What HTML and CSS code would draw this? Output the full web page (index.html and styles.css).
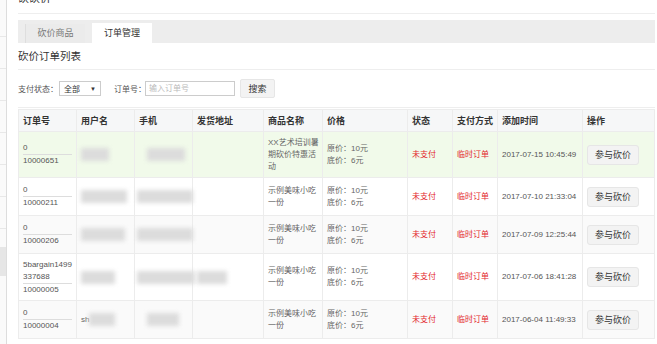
FILE: index.html
```html
<!DOCTYPE html>
<html lang="zh-CN">
<head>
    <meta charset="UTF-8">
    <title>砍砍价 - 订单管理</title>
    <link rel="stylesheet" href="styles.css">
</head>
<body>
<div class="page">
    <aside class="side">
        <div class="side-item"></div>
        <div class="side-item"></div>
        <div class="side-item"></div>
        <div class="side-item"></div>
        <div class="side-item"></div>
        <div class="side-item"></div>
        <div class="side-item"></div>
        <div class="side-gap"></div>
        <div class="side-item on"></div>
    </aside>
    <main class="main">
        <div class="top-title"><span>砍砍价</span></div>
        <div class="tabs">
            <a class="tab">砍价商品</a>
            <a class="tab active">订单管理</a>
        </div>
        <h2 class="list-title">砍价订单列表</h2>
        <div class="filter">
            <label>支付状态：</label>
            <div class="select"><span>全部</span><i>▼</i></div>
            <label class="ml">订单号：</label>
            <div class="input">输入订单号</div>
            <button class="btn-search">搜索</button>
        </div>
        <table class="orders">
            <colgroup>
                <col class="c58"><col class="c58"><col class="c58"><col class="c71"><col class="c59">
                <col class="c85"><col class="c45"><col class="c45"><col class="c85"><col class="c72">
            </colgroup>
            <thead>
                <tr>
                    <th>订单号</th><th>用户名</th><th>手机</th><th>发货地址</th><th>商品名称</th>
                    <th>价格</th><th>状态</th><th>支付方式</th><th>添加时间</th><th>操作</th>
                </tr>
            </thead>
            <tbody>
                <tr class="success">
                    <td><div class="ono-a">0</div><div>10000651</div></td>
                    <td><span class="blur b28"></span></td>
                    <td><span class="blur b38 in9"></span></td>
                    <td></td>
                    <td class="goods">XX艺术培训暑期砍价特惠活<br>动</td>
                    <td><div>原价：10元</div><div>底价：6元</div></td>
                    <td class="red">未支付</td>
                    <td class="red">临时订单</td>
                    <td class="time">2017-07-15 10:45:49</td>
                    <td><button class="btn-join">参与砍价</button></td>
                </tr>
                <tr>
                    <td><div class="ono-a">0</div><div>10000211</div></td>
                    <td><span class="blur b46"></span></td>
                    <td><span class="blur b56 out"></span></td>
                    <td></td>
                    <td class="goods">示例美味小吃一份</td>
                    <td><div>原价：10元</div><div>底价：6元</div></td>
                    <td class="red">未支付</td>
                    <td class="red">临时订单</td>
                    <td class="time">2017-07-10 21:33:04</td>
                    <td><button class="btn-join">参与砍价</button></td>
                </tr>
                <tr class="odd">
                    <td><div class="ono-a">0</div><div>10000206</div></td>
                    <td><span class="blur b44"></span></td>
                    <td><span class="blur b56 out"></span></td>
                    <td></td>
                    <td class="goods">示例美味小吃一份</td>
                    <td><div>原价：10元</div><div>底价：6元</div></td>
                    <td class="red">未支付</td>
                    <td class="red">临时订单</td>
                    <td class="time">2017-07-09 12:25:44</td>
                    <td><button class="btn-join">参与砍价</button></td>
                </tr>
                <tr>
                    <td><div class="ono-a">5bargain1499337688</div><div>10000005</div></td>
                    <td><span class="blur b34"></span></td>
                    <td><span class="blur b58 out"></span></td>
                    <td><span class="blur b30"></span></td>
                    <td class="goods">示例美味小吃一份</td>
                    <td><div>原价：10元</div><div>底价：6元</div></td>
                    <td class="red">未支付</td>
                    <td class="red">临时订单</td>
                    <td class="time">2017-07-06 18:41:28</td>
                    <td><button class="btn-join">参与砍价</button></td>
                </tr>
                <tr class="odd">
                    <td><div class="ono-a">0</div><div>10000004</div></td>
                    <td>sh<span class="blur b26"></span></td>
                    <td><span class="blur b32 in9"></span></td>
                    <td></td>
                    <td class="goods">示例美味小吃一份</td>
                    <td><div>原价：10元</div><div>底价：6元</div></td>
                    <td class="red">未支付</td>
                    <td class="red">临时订单</td>
                    <td class="time">2017-06-04 11:49:33</td>
                    <td><button class="btn-join">参与砍价</button></td>
                </tr>
            </tbody>
        </table>
    </main>
</div>
</body>
</html>
```

FILE: styles.css
```css
body {
    margin: 0;
    font-family: "Liberation Sans", "Noto Sans CJK SC", sans-serif;
    font-size: 8px;
    color: #666;
    background: #fff;
    overflow: hidden;
}
.page {
    display: flex;
    height: 344px;
}

/* 左侧菜单，只露出一条边 */
.side {
    width: 6px;
    padding-top: 5px;
    background: #fafafa;
    border-right: 1px solid #ddd;
}
.side-item {
    height: 31px;
    border-bottom: 1px solid #e8e8e8;
}
.side-gap {
    height: 18px;
}
.side-item.on {
    height: 29px;
    background: #e6e6e6;
    border-bottom: 0;
}

.main {
    flex: 1;
    padding: 0 2px 0 11px;
}
.top-title {
    height: 13px;
    overflow: hidden;
    border-bottom: 1px solid #eee;
}
.top-title span {
    display: block;
    margin-top: -9px;
    font-size: 11px;
    line-height: 14px;
    color: #333;
}

/* 标签页 */
.tabs {
    display: flex;
    align-items: flex-end;
    gap: 7px;
    height: 23px;
    margin-top: 6px;
    padding-left: 7px;
    background: #ededed;
}
.tab {
    width: 60px;
    height: 19px;
    line-height: 19px;
    text-align: center;
    font-size: 9px;
    color: #777;
    background: #ebebeb;
    border-left: 1px solid #dedede;
    box-sizing: border-box;
}
.tab.active {
    height: 20px;
    line-height: 20px;
    color: #333;
    background: #fff;
    border-left: 0;
}

.list-title {
    margin: 0;
    height: 26px;
    line-height: 27px;
    font-size: 10.5px;
    font-weight: normal;
    color: #333;
    border-bottom: 1px solid #eee;
}

/* 搜索条件 */
.filter {
    display: flex;
    align-items: center;
    height: 37px;
    border-bottom: 1px solid #eee;
    color: #555;
}
.filter .ml {
    margin-left: 13px;
}
.select {
    display: flex;
    justify-content: space-between;
    align-items: center;
    width: 42px;
    height: 15px;
    margin-left: 1px;
    padding: 0 4px;
    box-sizing: border-box;
    border: 1px solid #ccc;
    color: #333;
}
.select i {
    font-style: normal;
    font-size: 6px;
}
.input {
    width: 90px;
    height: 15px;
    line-height: 13px;
    margin-left: -1px;
    padding: 0 3px;
    box-sizing: border-box;
    border: 1px solid #ccc;
    color: #bbb;
}
.btn-search {
    width: 35px;
    height: 19px;
    margin-left: 5px;
    padding: 0;
    font-family: inherit;
    font-size: 9px;
    color: #333;
    background: #f3f3f3;
    border: 1px solid #e6e6e6;
    border-radius: 2px;
}

/* 订单表格 */
.orders {
    width: 636px;
    margin-top: 1px;
    border-collapse: collapse;
    table-layout: fixed;
}
.c58 { width: 58px; }
.c59 { width: 59px; }
.c71 { width: 71px; }
.c72 { width: 72px; }
.c85 { width: 85px; }
.c45 { width: 45px; }
.orders th,
.orders td {
    padding: 4.5px 4px;
    border: 1px solid #ececec;
    text-align: left;
    vertical-align: middle;
    line-height: 12px;
}
.orders th {
    background: #f6f7f8;
    color: #333;
    font-size: 9px;
    font-weight: bold;
}
.orders tbody tr {
    height: 38px;
}
.orders tr.success td {
    background: #f1faea;
}
.orders tr.odd td {
    background: #fafafa;
}
.orders td:first-child {
    color: #555;
    word-break: break-all;
}
.orders td.goods {
    padding-right: 3px;
}
.ono-a {
    border-bottom: 1px solid #ddd;
}
.red {
    color: #e3262b;
}
.time {
    white-space: nowrap;
    color: #555;
}
.btn-join {
    padding: 3px 7px;
    font-family: inherit;
    font-size: 9px;
    line-height: 12px;
    color: #333;
    background: #f3f3f3;
    border: 1px solid #e6e6e6;
    border-radius: 3px;
}

/* 打码的用户信息 */
.blur {
    display: inline-block;
    height: 13px;
    vertical-align: middle;
    background: #dcdcdc;
    filter: blur(2px);
}
.in9 { margin-left: 8px; }
.out { margin-left: -2px; }
.b26 { width: 26px; }
.b28 { width: 28px; }
.b30 { width: 30px; }
.b32 { width: 32px; }
.b34 { width: 34px; }
.b38 { width: 38px; }
.b44 { width: 44px; }
.b46 { width: 46px; }
.b56 { width: 56px; }
.b58 { width: 58px; }
```
